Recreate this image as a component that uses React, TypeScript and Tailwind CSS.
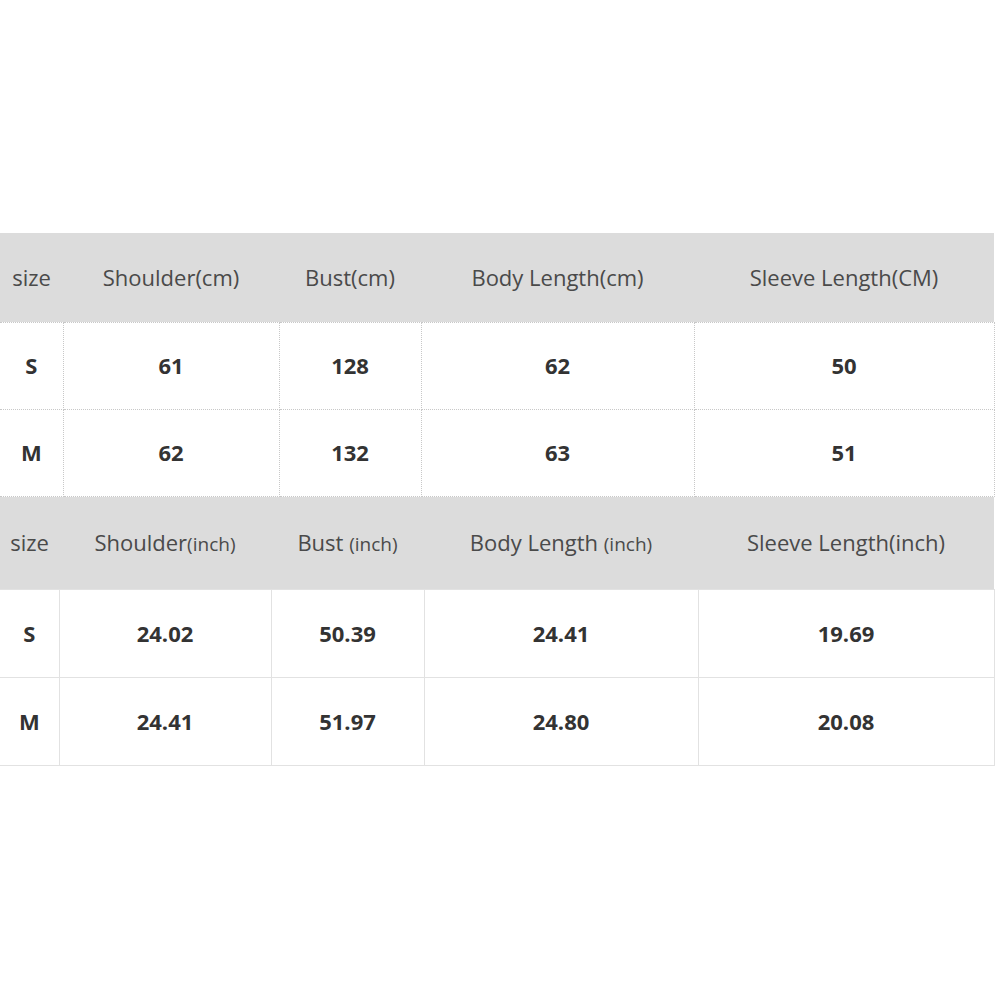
const font = { fontFamily: '"Open Sans", "Noto Sans", sans-serif' };

type Head = { main: string; unit?: string };

function SizeTable({
	widths,
	heads,
	rows,
	dotted,
	headH,
	rowH,
}: {
	widths: string[];
	heads: Head[];
	rows: string[][];
	dotted: boolean;
	headH: string;
	rowH: string;
}) {
	const line = dotted
		? "border-dotted border-[#c8c8c8]"
		: "border-solid border-[#e2e2e2]";
	return (
		<table className="table-fixed border-collapse w-[994px]">
			<colgroup>
				{widths.map((w, i) => (
					<col key={i} className={w} />
				))}
			</colgroup>
			<thead>
				<tr className={`bg-[#dcdcdc] ${headH}`}>
					{heads.map((h, i) => (
						<th
							key={i}
							className="p-0 text-center font-normal text-[22px] text-[#4a4a4a] whitespace-nowrap"
						>
							{h.main}
							{h.unit && <span className="text-[19px]">{h.unit}</span>}
						</th>
					))}
				</tr>
			</thead>
			<tbody>
				{rows.map((r, ri) => (
					<tr key={ri} className={rowH}>
						{r.map((c, ci) => (
							<td
								key={ci}
								className={`p-0 text-center font-bold text-[22px] text-[#333] border ${line} ${
									ci === 0 ? "border-l-0" : ""
								}`}
							>
								{c}
							</td>
						))}
					</tr>
				))}
			</tbody>
		</table>
	);
}

export default function App() {
	return (
		<div className="w-[1000px] h-[1000px] bg-white pt-[233px]" style={font}>
			<SizeTable
				widths={["w-[63px]", "w-[216px]", "w-[142px]", "w-[273px]", "w-[300px]"]}
				heads={[
					{ main: "size" },
					{ main: "Shoulder(cm)" },
					{ main: "Bust(cm)" },
					{ main: "Body Length(cm)" },
					{ main: "Sleeve Length(CM)" },
				]}
				rows={[
					["S", "61", "128", "62", "50"],
					["M", "62", "132", "63", "51"],
				]}
				dotted
				headH="h-[89px]"
				rowH="h-[87px]"
			/>
			<SizeTable
				widths={["w-[59px]", "w-[212px]", "w-[153px]", "w-[274px]", "w-[296px]"]}
				heads={[
					{ main: "size" },
					{ main: "Shoulder", unit: "(inch)" },
					{ main: "Bust ", unit: "(inch)" },
					{ main: "Body Length ", unit: "(inch)" },
					{ main: "Sleeve Length(inch)" },
				]}
				rows={[
					["S", "24.02", "50.39", "24.41", "19.69"],
					["M", "24.41", "51.97", "24.80", "20.08"],
				]}
				dotted={false}
				headH="h-[93px]"
				rowH="h-[88px]"
			/>
		</div>
	);
}
